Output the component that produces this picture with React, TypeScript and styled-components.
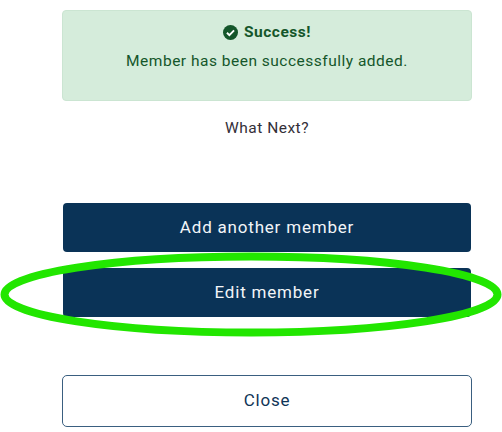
import { createGlobalStyle, styled } from 'styled-components';

const GlobalStyle = createGlobalStyle`
  html, body {
    margin: 0;
    padding: 0;
    background: #fff;
    overflow: hidden;
  }
  * {
    box-sizing: border-box;
  }
`;

const Page = styled.div`
  position: relative;
  width: 502px;
  height: 432px;
  padding: 10px 30px 0 62px;
  display: flex;
  flex-direction: column;
  font-family: Roboto, 'Liberation Sans', sans-serif;
  letter-spacing: 0.5px;
`;

const Alert = styled.div`
  height: 91px;
  padding-top: 11px;
  display: flex;
  flex-direction: column;
  align-items: center;
  background: #d5ecdb;
  border: 1px solid #cbe5d2;
  border-radius: 4px;
  color: #14562a;
`;

const AlertTitle = styled.div`
  display: flex;
  align-items: center;
  gap: 6px;
  height: 20px;
  font-size: 15.5px;
  font-weight: 700;
`;

const AlertText = styled.div`
  margin-top: 9px;
  font-size: 15.5px;
  line-height: 20px;
`;

const Prompt = styled.div`
  margin-top: 17px;
  text-align: center;
  font-size: 15.5px;
  line-height: 20px;
  color: #332f38;
`;

const Actions = styled.div`
  margin-top: 65px;
  padding: 0 1px;
  display: flex;
  flex-direction: column;
  gap: 16px;
`;

const PrimaryButton = styled.button`
  height: 49px;
  padding: 0 0 2px;
  border: none;
  border-radius: 4px;
  background: #0a3357;
  color: #f2f5f8;
  font: inherit;
  font-size: 17px;
  letter-spacing: 0.8px;
`;

const CloseButton = styled.button`
  height: 52px;
  margin-top: 58px;
  padding: 0 0 2px;
  border: 1px solid #3a5f80;
  border-radius: 5px;
  background: #fff;
  color: #0f3557;
  font: inherit;
  font-size: 17px;
  letter-spacing: 0.8px;
`;

const Annotation = styled.svg`
  position: absolute;
  left: 0;
  top: 250px;
  width: 502px;
  height: 90px;
  pointer-events: none;
`;

export default function App() {
  return (
    <>
      <GlobalStyle />
      <Page>
        <Alert>
          <AlertTitle>
            <svg width="15" height="15" viewBox="0 0 16 16" aria-hidden="true">
              <circle cx="8" cy="8" r="8" fill="#14562a" />
              <path d="M4.2 8.3l2.6 2.6 5-5.2" fill="none" stroke="#fff" strokeWidth="2" />
            </svg>
            Success!
          </AlertTitle>
          <AlertText>Member has been successfully added.</AlertText>
        </Alert>
        <Prompt>What Next?</Prompt>
        <Actions>
          <PrimaryButton>Add another member</PrimaryButton>
          <PrimaryButton>Edit member</PrimaryButton>
        </Actions>
        <CloseButton>Close</CloseButton>
        <Annotation viewBox="0 0 502 90">
          <ellipse cx="251" cy="44.5" rx="246.5" ry="38" fill="none" stroke="#22e600" strokeWidth="8" />
        </Annotation>
      </Page>
    </>
  );
}
